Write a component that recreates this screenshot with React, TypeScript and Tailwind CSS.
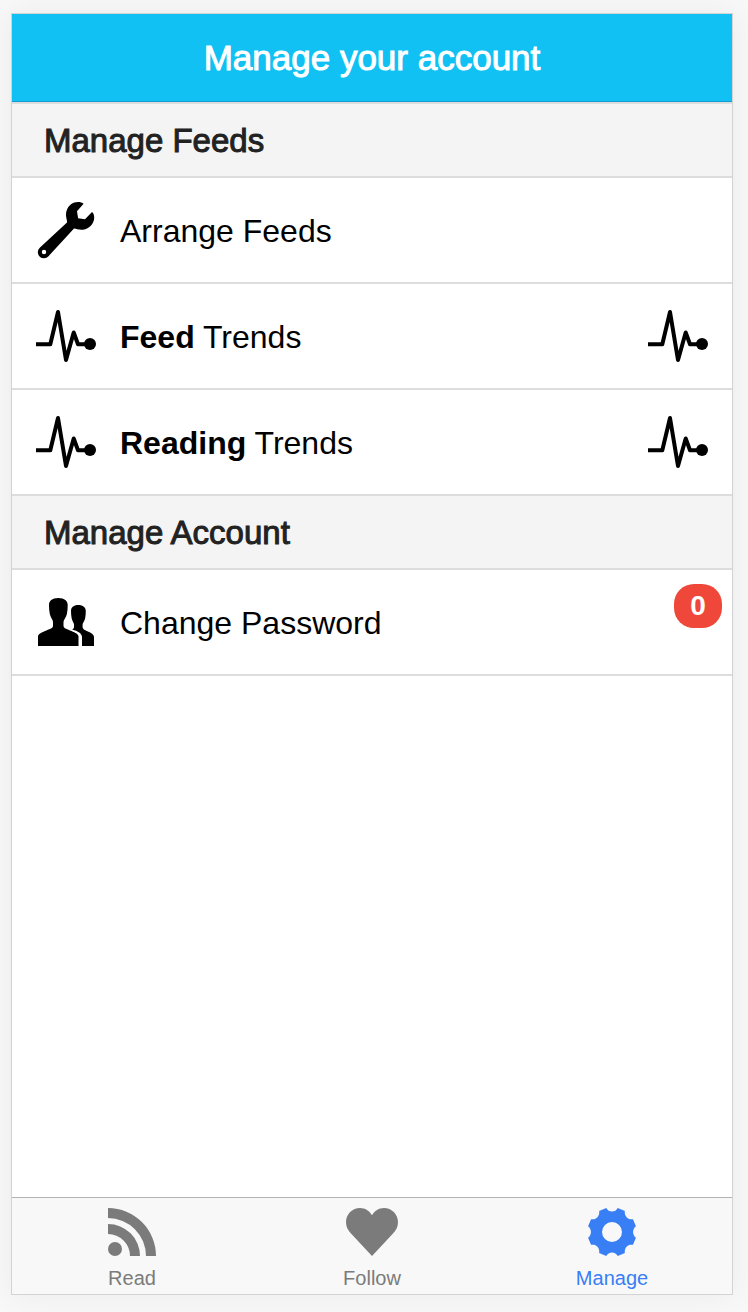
import React from "react";

function WrenchIcon() {
  return (
    <svg viewBox="0 0 60 60" className="size-15 shrink-0" fill="currentColor" aria-hidden="true">
      <path
        fillRule="evenodd"
        d="M47.600 3.700C45 1.600 39 1.200 35 4.200C31 7.300 29.800 11.500 30 15.500C30.200 18.500 31.200 20 31 22.500L4 47.500A6.100 6.100 0 1 0 12.500 56.200L38 28.600C40.500 28.800 43 30.100 47 29.700C53.500 29 58.200 23.500 58.200 17.500C58.200 15 57.500 13 56 12L49 19.300L42.100 18.200L41 11.200ZM8 49.800a2.200 2.200 0 1 1 0 4.400a2.200 2.200 0 0 1 0-4.400z"
      />
    </svg>
  );
}

function PulseIcon() {
  return (
    <svg viewBox="0 0 60 60" className="size-15 shrink-0" aria-hidden="true">
      <path
        d="M0 38.200H14.300L22 6L30 54L37.700 26.500L42 38.200H50"
        fill="none"
        stroke="currentColor"
        strokeWidth="4"
        strokeLinejoin="round"
      />
      <circle cx="54" cy="38" r="6" fill="currentColor" />
    </svg>
  );
}

function PeopleIcon() {
  return (
    <svg viewBox="0 0 60 60" className="size-15 shrink-0" fill="currentColor" aria-hidden="true">
      <path d="M22.300 6C16 6 13 9 13 13C13 16 13.200 19 13.800 22C14.400 25 17 28 17 30V34C17 36.500 13 37.300 9 39C5 40.700 2 42.200 2 44.500V54H42.500V44.500C42.500 42.200 39.500 40.700 35.500 39C31.500 37.300 27.500 36.500 27.500 34V30C27.500 28 30.300 25 30.900 22C31.500 19 31.700 16 31.700 13C31.700 9 28.600 6 22.300 6Z" />
      <path d="M42.300 13C37.500 13 35 15.500 35 19C35 21.500 35.200 24 35.700 26.500C36.200 29 38 31 38 32.500V35C38 36.500 37.300 37 36.200 37.400C42 39 46 41.500 46 45V54H58V45C58 42.500 55.500 41.200 52.500 39.700C49.500 38.300 46.600 37.300 46.600 35V32.500C46.600 31 48.600 29 49.100 26.500C49.600 24 49.800 21.500 49.800 19C49.800 15.500 47 13 42.300 13Z" />
    </svg>
  );
}

function FeedIcon() {
  return (
    <svg viewBox="0 0 48 48" className="h-12 w-12" fill="currentColor" aria-hidden="true">
      <circle cx="7" cy="41" r="7" />
      <path d="M0 16A32 32 0 0 1 32 48H22A22 22 0 0 0 0 26Z" />
      <path d="M0 0A48 48 0 0 1 48 48H38A38 38 0 0 0 0 10Z" />
    </svg>
  );
}

function HeartIcon() {
  return (
    <svg viewBox="0 0 52 48" className="h-12 w-13" fill="currentColor" aria-hidden="true">
      <path d="M26 7.300C23.500 2.800 19 0 14 0C6.300 0 0 6.300 0 14C0 19 2 22.200 5 25.500L26 48L47 25.500C50 22.200 52 19 52 14C52 6.300 45.700 0 38 0C33 0 28.500 2.800 26 7.300Z" />
    </svg>
  );
}

const gearPath = (() => {
  const at = (deg: number) => {
    const a = ((deg - 90) * Math.PI) / 180;
    return `${(24 + 24.6 * Math.cos(a)).toFixed(2)} ${(24 + 24.6 * Math.sin(a)).toFixed(2)}`;
  };
  let d = `M${at(-13.5)}`;
  for (let k = 0; k < 8; k++) {
    d += `A6.600 7 0 0 0 ${at(k * 45 + 13.5)}L${at(k * 45 + 31.5)}`;
  }
  return d + "ZM24 14a10 10 0 1 0 0 20a10 10 0 0 0 0-20Z";
})();

function GearIcon() {
  return (
    <svg viewBox="0 0 48 48" className="h-12 w-12" fill="currentColor" aria-hidden="true">
      <path fillRule="evenodd" d={gearPath} />
    </svg>
  );
}

function SectionTitle({ children }: { children: React.ReactNode }) {
  return (
    <h2 className="flex h-[74px] items-center border-b-2 border-[#dddddd] bg-[#f4f4f4] px-8 pt-0.5 text-[33px] text-[#222222] [-webkit-text-stroke:1px_currentColor]">
      {children}
    </h2>
  );
}

type RowProps = {
  icon: React.ReactNode;
  trailing?: React.ReactNode;
  badge?: number;
  children: React.ReactNode;
};

function Row({ icon, trailing, badge, children }: RowProps) {
  return (
    <li className="border-b-2 border-[#dddddd]">
      <a href="#" className="relative flex h-26 items-center gap-6 px-6 text-[32px] text-black">
        {icon}
        <span className="flex-1 pt-0.5">{children}</span>
        {trailing}
        {badge !== undefined && (
          <span className="absolute top-3.5 right-2.5 flex h-11 w-12 items-center justify-center rounded-[20px] bg-[#ef473a] text-[28px] font-bold text-white">
            {badge}
          </span>
        )}
      </a>
    </li>
  );
}

function Tab({ icon, label, active = false }: { icon: React.ReactNode; label: string; active?: boolean }) {
  return (
    <a
      href="#"
      aria-current={active ? "page" : undefined}
      className={`flex flex-1 flex-col items-center gap-2 pt-2.5 text-xl/7 ${active ? "text-[#387ef5]" : "text-[#7b7b7b]"}`}
    >
      {icon}
      <span>{label}</span>
    </a>
  );
}

export default function App() {
  return (
    <div className="flex min-h-screen flex-col bg-[#f8f8f8] pt-[13px] pr-[15px] pb-[17px] pl-[11px] font-['Liberation_Sans',Arial,sans-serif]">
      <div className="flex flex-1 flex-col border border-[#d3d3d3] bg-white shadow-[0_0_32px_rgba(0,0,0,0.06)]">
        <header className="flex h-22 items-center justify-center border-b border-[#0c9fcf] bg-[#11c1f3]">
          <h1 className="pt-0.5 text-[35px] text-white [-webkit-text-stroke:1px_currentColor]">
            Manage your account
          </h1>
        </header>
        <main className="flex-1 border-t-2 border-[#dddddd]">
          <SectionTitle>Manage Feeds</SectionTitle>
          <ul>
            <Row icon={<WrenchIcon />}>Arrange Feeds</Row>
            <Row icon={<PulseIcon />} trailing={<PulseIcon />}>
              <b>Feed</b> Trends
            </Row>
            <Row icon={<PulseIcon />} trailing={<PulseIcon />}>
              <b>Reading</b> Trends
            </Row>
          </ul>
          <SectionTitle>Manage Account</SectionTitle>
          <ul>
            <Row icon={<PeopleIcon />} badge={0}>
              Change Password
            </Row>
          </ul>
        </main>
        <nav className="flex h-[97px] border-t border-[#b2b2b2] bg-[#f8f8f8]">
          <Tab icon={<FeedIcon />} label="Read" />
          <Tab icon={<HeartIcon />} label="Follow" />
          <Tab icon={<GearIcon />} label="Manage" active />
        </nav>
      </div>
    </div>
  );
}
